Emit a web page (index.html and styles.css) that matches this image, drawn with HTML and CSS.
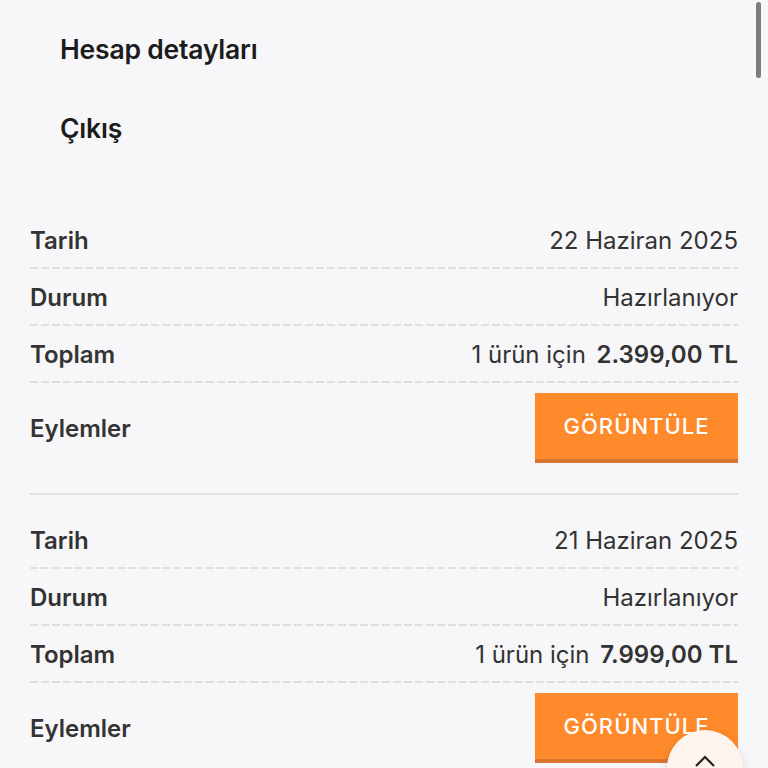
FILE: index.html
```html
<!DOCTYPE html>
<html lang="tr">
<head>
  <meta charset="UTF-8" />
  <meta name="viewport" content="width=device-width, initial-scale=1.0" />
  <title>Siparişler</title>
  <link rel="stylesheet" href="styles.css">
</head>
<body>

  <ul class="account-menu">
    <li><a href="#">Hesap detayları</a></li>
    <li><a href="#">Çıkış</a></li>
  </ul>

  <section class="orders">
    <div class="order">
      <div class="row">
        <span class="label">Tarih</span>
        <span class="value">22 Haziran 2025</span>
      </div>
      <div class="row">
        <span class="label">Durum</span>
        <span class="value">Hazırlanıyor</span>
      </div>
      <div class="row">
        <span class="label">Toplam</span>
        <span class="value">1 ürün için <strong>2.399,00 TL</strong></span>
      </div>
      <div class="row actions">
        <span class="label">Eylemler</span>
        <a href="#" class="btn">GÖRÜNTÜLE</a>
      </div>
    </div>

    <div class="order">
      <div class="row">
        <span class="label">Tarih</span>
        <span class="value">21 Haziran 2025</span>
      </div>
      <div class="row">
        <span class="label">Durum</span>
        <span class="value">Hazırlanıyor</span>
      </div>
      <div class="row">
        <span class="label">Toplam</span>
        <span class="value">1 ürün için <strong>7.999,00 TL</strong></span>
      </div>
      <div class="row actions">
        <span class="label">Eylemler</span>
        <a href="#" class="btn">GÖRÜNTÜLE</a>
      </div>
    </div>
  </section>

  <div class="scrollbar"></div>

  <a href="#" class="to-top">
    <svg width="22" height="14" viewBox="0 0 22 14"><path d="M2 12 L11 3 L20 12" fill="none" stroke="#222" stroke-width="2.2"/></svg>
  </a>

</body>
</html>
```

FILE: styles.css
```css
body {
  margin: 0;
  font-family: Inter, 'Noto Sans', sans-serif;
  color: #333;
  background-color: #f7f7f9;
}

.account-menu {
  list-style: none;
  margin: 0;
  padding: 9px 0 0 60px;
}

.account-menu li {
  height: 79px;
  display: flex;
  align-items: center;
}

.account-menu a {
  color: #1c1c1c;
  text-decoration: none;
  font-size: 26.5px;
  font-weight: 600;
  letter-spacing: -0.2px;
}

.orders {
  margin-top: 45px;
  padding: 0 30px;
}

.order {
  border-bottom: 2px solid #e2e2e4;
  margin-bottom: 17px;
}

.row {
  display: flex;
  justify-content: space-between;
  align-items: center;
  height: 57px;
  font-size: 24px;
  background-image: repeating-linear-gradient(to right, #dfdfe2 0 8px, transparent 8px 11px);
  background-size: 100% 2px;
  background-position: bottom;
  background-repeat: no-repeat;
}

.label {
  font-weight: 600;
}

.value strong {
  font-weight: 600;
  margin-left: 4px;
}

.actions {
  height: auto;
  background: none;
  padding: 10px 0 30px;
}

.btn {
  display: flex;
  align-items: center;
  justify-content: center;
  width: 203px;
  height: 66px;
  box-sizing: content-box;
  background-color: #ff8a2b;
  border-bottom: 4px solid #d97330;
  color: white;
  text-decoration: none;
  font-size: 22px;
  font-weight: 500;
  letter-spacing: 1px;
}

.scrollbar {
  position: fixed;
  top: 2px;
  right: 7px;
  width: 5px;
  height: 76px;
  border-radius: 3px;
  background: #7d7d7d;
}

.to-top {
  position: fixed;
  left: 667px;
  top: 730px;
  width: 76px;
  height: 76px;
  border-radius: 50%;
  background: #fdf4ee;
  box-shadow: 0 2px 10px rgba(0,0,0,0.12);
  display: flex;
  justify-content: center;
  padding-top: 24px;
  box-sizing: border-box;
}
```
